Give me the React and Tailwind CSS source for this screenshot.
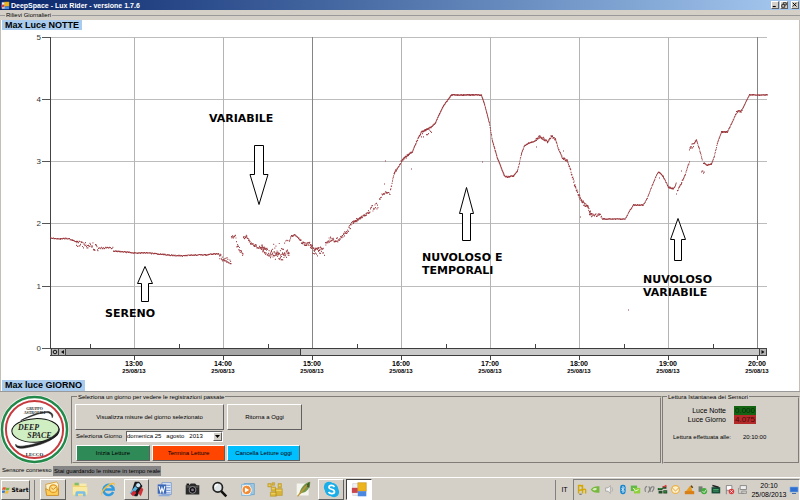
import { clsx } from 'clsx'

const hours = [
  { x: 134, label: '13:00' },
  { x: 223, label: '14:00' },
  { x: 312, label: '15:00' },
  { x: 401, label: '16:00' },
  { x: 490, label: '17:00' },
  { x: 579, label: '18:00' },
  { x: 668, label: '19:00' },
  { x: 757, label: '20:00' },
]

const levels = [
  { y: 37, label: '5' },
  { y: 99, label: '4' },
  { y: 161, label: '3' },
  { y: 223, label: '2' },
  { y: 286, label: '1' },
  { y: 348, label: '0' },
]

// spread = vertical noise, step = distance between two readings
const series = [
  { spread: 0.5, step: 0.7, pts: [[50, 238], [60, 239], [67, 238.5], [72, 240], [77, 242]] },
  { spread: 3.5, step: 0.5, pts: [[76, 244], [85, 246], [92, 246], [98, 249]] },
  { spread: 0.7, step: 0.8, pts: [[98, 248], [113, 248]] },
  { spread: 0.5, step: 0.6, pts: [[113, 251], [134, 253], [148, 253], [168, 255], [182, 256], [190, 255], [205, 255], [212, 254], [219, 254]] },
  { spread: 3, step: 0.4, pts: [[219, 257], [225, 259], [231, 261]] },
  { spread: 2, step: 0.5, pts: [[231, 237], [236, 236]] },
  { spread: 3, step: 0.4, pts: [[236, 243], [239, 250], [243, 255]] },
  { spread: 1.4, step: 0.4, pts: [[243, 238], [246, 236], [250, 243], [257, 247], [265, 249]] },
  { spread: 4, step: 0.3, pts: [[261, 248], [268, 253], [276, 256], [284, 256], [289, 252]] },
  { spread: 5, step: 1.1, pts: [[270, 249], [282, 247], [288, 243]] },
  { spread: 0.8, step: 0.5, pts: [[289, 241], [291, 236], [295, 235], [300, 240]] },
  { spread: 1.8, step: 0.35, pts: [[300, 241], [304, 244], [310, 244], [314, 250], [323, 248]] },
  { spread: 2.5, step: 1, pts: [[310, 250], [316, 254], [325, 253]] },
  { spread: 2.4, step: 0.4, pts: [[325, 243], [330, 239], [337, 240], [344, 234], [350, 227]] },
  { spread: 2, step: 0.5, pts: [[350, 225], [354, 221], [360, 219]] },
  { spread: 0.9, step: 0.4, pts: [[353, 222], [360, 218], [368, 213]] },
  { spread: 3.4, step: 0.5, pts: [[368, 210], [373, 208], [378, 205]] },
  { spread: 1.3, step: 0.6, pts: [[379, 200], [382, 194], [386, 192], [390, 194]] },
  { spread: 1.3, step: 0.4, pts: [[390, 189], [392, 182], [394, 173], [397, 168], [401, 161]] },
  { spread: 0.8, step: 0.3, pts: [[401, 161], [406, 156], [412, 152], [416, 142], [421, 132], [425, 130], [431, 127]] },
  { spread: 4, step: 1, pts: [[421, 134], [427, 132], [432, 129]] },
  { spread: 0.4, step: 0.3, pts: [[431, 127], [435, 123], [439, 114], [443, 106], [451, 95], [481, 95]] },
  { spread: 0.6, step: 0.22, pts: [[481, 95], [484, 104], [489, 123], [492, 141], [497, 158], [504, 176]] },
  { spread: 0.5, step: 0.4, pts: [[504, 176], [507, 177], [513, 176], [517, 171], [519, 163], [521, 154], [524, 146], [528, 143], [535, 141]] },
  { spread: 1.3, step: 0.35, pts: [[535, 140], [539, 137], [544, 139], [547, 142], [551, 136], [555, 139]] },
  { spread: 1, step: 0.35, pts: [[555, 139], [558, 149], [562, 158], [567, 161], [570, 170]] },
  { spread: 2, step: 0.3, pts: [[570, 170], [574, 184], [579, 197], [583, 203], [588, 208], [591, 215]] },
  { spread: 1.6, step: 0.5, pts: [[589, 214], [594, 216], [598, 214], [602, 217]] },
  { spread: 0.4, step: 0.5, pts: [[602, 219], [625, 219], [629, 211], [633, 205], [643, 205], [647, 198], [652, 185], [657, 173], [659, 172]] },
  { spread: 0.7, step: 0.4, pts: [[659, 172], [663, 177], [668, 187], [673, 189], [676, 183]] },
  { spread: 0.8, step: 0.4, pts: [[677, 191], [681, 183], [685, 174], [689, 162]] },
  { spread: 2.4, step: 0.5, pts: [[689, 149], [692, 146], [694, 143]] },
  { spread: 0.8, step: 0.4, pts: [[694, 143], [696, 140], [699, 149], [702, 161]] },
  { spread: 1.5, step: 0.7, pts: [[701, 171], [704, 173]] },
  { spread: 0.5, step: 0.4, pts: [[703, 163], [707, 165], [711, 164], [714, 156], [717, 143], [721, 132], [727, 132], [731, 124], [736, 113]] },
  { spread: 1.2, step: 0.4, pts: [[736, 112], [741, 111], [743, 108]] },
  { spread: 0.3, step: 0.4, pts: [[743, 107], [749, 95], [767, 95]] },
]

const strays = [[385, 161], [384, 184], [406, 158], [411, 169], [482, 162], [563, 151], [580, 217], [536, 147], [628, 310], [681, 171], [659, 178], [676, 194]]

function buildReadings() {
  let seed = 17
  const rand = () => {
    seed = (seed * 16807) % 2147483647
    return seed / 2147483647
  }
  let d = ''
  series.forEach(({ spread, step, pts }) => {
    for (let i = 0; i < pts.length - 1; i++) {
      const [x1, y1] = pts[i]
      const [x2, y2] = pts[i + 1]
      for (let x = x1; x < x2; x += step) {
        const y = y1 + ((y2 - y1) * (x - x1)) / (x2 - x1) + (rand() - 0.5) * 2 * spread
        d += `M${x.toFixed(1)} ${y.toFixed(1)}h.9`
      }
    }
  })
  strays.forEach(([x, y]) => { d += `M${x} ${y}h1` })
  return d
}

const readings = buildReadings()

const notes = [
  { x: 209, y: 122, lines: ['VARIABILE'], arrow: 'M254.5 145.5h9v29h4.500l-9 30-9-30h4.500z' },
  { x: 105, y: 317, lines: ['SERENO'], arrow: 'M141.500 301.500v-18h-4l7.500-17 7.500 17h-4v18z' },
  { x: 422, y: 261, lines: ['NUVOLOSO E', 'TEMPORALI'], arrow: 'M462.500 240.500v-27h-3l7-26 7 26h-3v27z' },
  { x: 643, y: 283, lines: ['NUVOLOSO', 'VARIABILE'], arrow: 'M674.500 260.500v-21h-4l7.500-21 7.500 21h-4v21z' },
]

function Chart() {
  return (
    <svg viewBox="1 30 798 350" className="block w-full h-auto" role="img" aria-label="Max Luce">
      {/* Grid */}
      {levels.map(l => (
        <g key={l.label}>
          <path d={`M50 ${l.y + 0.5}H767`} stroke="#bdbdbd" />
          <path d={`M42 ${l.y + 0.5}H50`} stroke="#555" />
          <text x="41" y={l.y + 3} textAnchor="end" className="font-['Liberation_Sans'] text-[8px]" fill="#333">{l.label}</text>
        </g>
      ))}
      {hours.map(h => (
        <g key={h.label}>
          <path d={`M${h.x + 0.5} 37V348`} stroke={h.x === 312 || h.x === 757 ? '#858585' : '#b4b4b4'} />
          <path d={`M${h.x - 43.5} 344v4`} stroke="#444" />
          <path d={`M${h.x + 0.5} 356v4`} stroke="#444" />
          <text x={h.x} y="366" textAnchor="middle" className="font-['Liberation_Sans'] text-[7px] font-bold">{h.label}</text>
          <text x={h.x} y="373" textAnchor="middle" className="font-['Liberation_Sans'] text-[6px] font-bold">25/08/13</text>
        </g>
      ))}
      <path d="M50.500 37V356" stroke="#444" />

      {/* Scroll bar */}
      <rect x="50" y="348" width="717" height="8" fill="#c9c9c9" />
      <rect x="66" y="349" width="234" height="7" fill="#a6a6a6" />
      <path d="M50 348.500H767M50 355.500H767M300.500 348v8" stroke="#3c3c3c" fill="none" />
      {[51, 58, 759].map(x => (
        <rect key={x} x={x + 0.5} y="348.500" width="7" height="7" fill="#b5b5b5" stroke="#444" />
      ))}
      <circle cx="55" cy="352" r="1.800" fill="none" stroke="#111" />
      <path d="M64 350v4l-3-2zM761.500 350v4l3-2z" fill="#111" />

      <path d={readings} stroke="#9c3a3f" strokeWidth="1.200" fill="none" />

      {notes.map(n => (
        <g key={n.arrow}>
          <path d={n.arrow} fill="#fff" stroke="#000" />
          {n.lines.map((line, i) => (
            <text key={line} x={n.x} y={n.y + i * 13} className="font-['DejaVu_Sans'] text-[11px] font-bold">{line}</text>
          ))}
        </g>
      ))}
    </svg>
  )
}

function Logo() {
  return (
    <svg viewBox="0 0 72 72" className="w-[71px] shrink-0" role="img" aria-label="Gruppo Astrofili Deep Space Lecco">
      <circle cx="35" cy="37" r="35" fill="#f4f6f0" />
      <circle cx="35" cy="37" r="33" fill="#fff" stroke="#23894b" strokeWidth="2.500" />
      <circle cx="35" cy="37" r="29" fill="#fff" stroke="#c73a3e" strokeWidth="2" />
      <ellipse cx="36" cy="38" rx="24" ry="12" fill="#cfeec2" stroke="#111" strokeWidth="1" transform="rotate(-2 36 38)" />
      <path d="M21 28C29 23 44 18 50 19q5 2 3 6 0-4-4-5C42 19 31 24 21 28z" fill="#222" stroke="#222" strokeWidth=".6" />
      <path d="M60 36c0 10-15 16-31 19-8 2-14 1-13-3 1 3 7 2 13 1 15-3 29-9 31-17z" fill="#222" stroke="#222" strokeWidth=".6" />
      <g className="font-['Liberation_Serif'] font-bold" textAnchor="middle" fill="#222">
        <text x="35" y="17" className="text-[4px]">GRUPPO</text>
        <text x="35" y="21" className="text-[4px]">ASTROFILI</text>
        <text x="29" y="38" className="text-[8px] italic">DEEP</text>
        <text x="40" y="46" className="text-[8px] italic">SPACE</text>
        <text x="35" y="64" className="text-[5px]">LECCO</text>
      </g>
    </svg>
  )
}

const raised = 'border border-t-white border-l-white border-r-[#606060] border-b-[#606060]'
const group = 'min-w-0 border-2 border-[#d4d0c8] [border-style:groove]'

function ControlPanel() {
  return (
    <fieldset className={clsx(group, 'flex-1 px-0.5 pb-px pt-[3px]')}>
      <legend className="ml-0.5 px-px leading-[8px]">Seleziona un giorno per vedere le registrazioni passate</legend>
      <div className="flex gap-[3px]">
        <button className={clsx(raised, 'h-[26px] w-[149px]')}>Visualizza misure del giorno selezionato</button>
        <button className={clsx(raised, 'h-[26px] w-[75px]')}>Ritorna a Oggi</button>
      </div>
      <div className="mt-px flex items-center">
        <label htmlFor="giorno" className="w-[51px] whitespace-nowrap pl-px">Seleziona Giorno</label>
        <div className="relative h-[11px] w-[97px] border border-t-[#606060] border-l-[#606060] border-r-white border-b-white bg-white">
          <select id="giorno" className="block h-[9px] w-full appearance-none bg-white leading-[9px]">
            <option>domenica 25{'\u00a0\u00a0'} agosto{'\u00a0\u00a0'} 2013</option>
          </select>
          <span className={clsx(raised, 'pointer-events-none absolute right-0 top-0 flex h-[9px] w-[9px] items-center justify-center bg-[#d4d0c8]')}>
            <svg viewBox="0 0 5 3" className="w-[5px]"><path d="M0 0h5L2.500 3z" /></svg>
          </span>
        </div>
      </div>
      <div className="mt-[3px] flex gap-[2px] pl-px">
        <button className={clsx(raised, 'h-4 w-[74px] bg-[#2e8b57]')}>Inizia Letture</button>
        <button className={clsx(raised, 'h-4 w-[73px] bg-[#ff4500]')}>Termina Letture</button>
        <button className={clsx(raised, 'h-4 w-[73px] bg-[#00bfff]')}>Cancella Letture oggi</button>
      </div>
    </fieldset>
  )
}

function SensorPanel() {
  return (
    <fieldset className={clsx(group, 'w-[138px] shrink-0 pt-[5px]')}>
      <legend className="ml-[3px] px-px leading-[8px]">Lettura Istantanea dei Sensori</legend>
      <dl className="grid grid-cols-[62px_22px] gap-x-2 leading-[9px]">
        <dt className="text-right text-[7px]">Luce Notte</dt>
        <dd className="bg-[#146414] pl-px text-[8px] text-[#062f06]">0.000</dd>
        <dt className="text-right text-[7px]">Luce Giorno</dt>
        <dd className="bg-[#b22a2a] pl-px text-[8px] text-[#4a0808]">4.075</dd>
      </dl>
      <p className="mt-2 flex gap-3 pl-[9px] leading-[10px]">
        <span>Lettura effettuata alle:</span>
        <span>20:10:00</span>
      </p>
    </fieldset>
  )
}

const apps = [
  { name: 'Outlook', raised: true, art: <><path d="M2 4l13-3 2 3v12H3z" fill="#fdf3d0" stroke="#d79a2a" /><path d="M2 9l8 4 7-4v8H3z" fill="#ffcd57" stroke="#c88a20" /><circle cx="11" cy="9" r="4.500" fill="#ffe08a" stroke="#e09a20" strokeWidth="1.500" /><path d="M8.500 8l2.500 2 3-3" stroke="#c77b17" fill="none" /></> },
  { name: 'Esplora risorse', art: <><path d="M1 3h6l1 2h9v12H1z" fill="#f0d470" /><path d="M3 2h5v3H3z" fill="#7fbf6a" /><path d="M9 3h8v3H9z" fill="#f7ebb0" /><path d="M1 7h17v9H1z" fill="#fae9a0" /><path d="M4 18v-4q0-2 2-2h8q2 0 2 2v4h-3v-3H7v3z" fill="#79bfe8" /></> },
  { name: 'Internet Explorer', art: <><path d="M15.500 13a6 6 0 1 1 .5-3H5" fill="none" stroke="#2e9be0" strokeWidth="3" /><path d="M2 17C-1 13 8 3 15 2c3 0 3 2 1 5 1-3 0-4-2-3C8 6 2 13 2 17z" fill="#f0bd3c" /></> },
  { name: 'Strumenti', raised: true, art: <><path d="M8 1h5l4 5-6 12H8l-4-5z" fill="#16181c" /><path d="M2 14l9-11 3 2-9 12z" fill="#54b7e6" /><circle cx="12" cy="5" r="3" fill="#c9e8f7" stroke="#111" /><path d="M3 15l4-4 3 3-4 4z" fill="#cf2a35" /><path d="M12 14l4-7 2 3-3 8z" fill="#d23236" /></> },
  { name: 'Word', art: <><path d="M7 2h11v14H7z" fill="#e7effb" stroke="#7393c8" /><path d="M12 5h5M12 8h5M12 11h5M9 14h8" stroke="#527fc4" /><path d="M2 4h10v11H2z" fill="#3d68b8" /><path d="M3.500 6l2 7 1.500-5 1.500 5 2-7" fill="none" stroke="#fff" strokeWidth="1.300" /><path d="M3 17h13" stroke="#8cabdd" strokeWidth="2" /></> },
  { name: 'Fotocamera', art: <><path d="M2 5h4l2-2h5l2 2h3v11H2z" fill="#2b2a2a" /><path d="M3 7h14" stroke="#777" /><circle cx="10" cy="10.500" r="4" fill="#111" stroke="#999" /><circle cx="10" cy="10.500" r="1.700" fill="#83758e" /><path d="M3 4h3" stroke="#111" strokeWidth="2" /></> },
  { name: 'Lente', art: <><circle cx="8" cy="7.500" r="5.500" fill="#dfe5e7" stroke="#222" strokeWidth="2" /><path d="M5 7q0-3 3-3" stroke="#fff" strokeWidth="1.500" fill="none" /><path d="M12 12l6 6" stroke="#111" strokeWidth="3" /></> },
  { name: 'Media Player', art: <><path d="M6 3h12v13H6z" fill="#9fc8e4" stroke="#6ca4cc" /><path d="M3 4h11v13H3z" fill="#d4e8f5" stroke="#80b4d6" /><circle cx="9" cy="10.500" r="5.500" fill="#f18a32" stroke="#fff" /><path d="M7 7.500v6l5-3z" fill="#fff" /></> },
  { name: 'Blocchi', art: <><path d="M1 3h4v4H1zM6 2h3v3H6zM5 7h5v5H5zM10 9h8v8h-8zM4 13h7v5H4zM13 3h4v5h-4z" fill="#d9b43a" stroke="#b39122" strokeWidth=".6" /><path d="M6 9h3M11 11h6M5 15h5M2 5h2M14 5h2" stroke="#f6df71" /></> },
  { name: 'Penna', art: <><path d="M2 3h14v14H2z" fill="#f5f5ef" /><path d="M5 16C6 9 11 2 18 1c0 7-4 13-10 13z" fill="#76964a" /><path d="M12 6l5-5v7z" fill="#3f5f2f" /><path d="M3 18L14 5" stroke="#c79632" strokeWidth="1.500" /></> },
  { name: 'Skype', raised: true, art: <><circle cx="7" cy="7" r="6" fill="#19aee9" /><circle cx="13" cy="13" r="6" fill="#19aee9" /><circle cx="10" cy="10" r="8" fill="#19aee9" /><path d="M13.500 7C12 4.500 7 4.500 7 7.500c0 3 6.500 1.500 6.500 5 0 3-5.500 3-7 .5" fill="none" stroke="#fff" strokeWidth="2" /></> },
  { name: 'Lux Rider', active: true, art: <AppGlyph /> },
]

function AppGlyph() {
  return (
    <>
      <path d="M2 3h7v14H2z" fill="#f0f0f4" stroke="#c3c3cc" strokeWidth=".6" />
      <path d="M1 8h7v6H1z" fill="#c9444c" />
      <path d="M8 2h10v10H8z" fill="#eeb41e" stroke="#b98a14" strokeWidth=".6" />
      <path d="M8 12h10v6H8z" fill="#4b88e0" />
    </>
  )
}

const tray = [
  { name: 'Photo', art: <><path d="M2 12V2h2q3 0 3 3T3 8M7 1v11M7 8q4-3 4 0v4" fill="none" stroke="#d4a800" strokeWidth="1.800" /><path d="M3 13h3" stroke="#444" /></> },
  { name: 'NVIDIA', art: <><path d="M1 7q4-5 11-4v8q-8 1-11-4z" fill="#78b83e" /><path d="M3 7q3-3 6-1-2 4-6 1z" fill="#d7efc0" /></> },
  { name: 'Volume', art: <><path d="M2 5h3l3-3v10L5 9H2z" fill="#f5f5f5" stroke="#888" strokeWidth=".7" /><path d="M10 4q2 3 0 6" stroke="#aaa" fill="none" /></> },
  { name: 'Bluetooth', art: <><rect x="4" y="1" width="7" height="12" rx="3" fill="#1786cf" /><path d="M5.500 5l4 4-2 2V3l2 2-4 4" stroke="#fff" fill="none" strokeWidth=".9" /></> },
  { name: 'Sync', art: <><path d="M1 2h8v7H1z" fill="#5eb846" /><path d="M5 5h8v7H5z" fill="#8ed03c" /><path d="M4 5l3 4 4-2" stroke="#fff" fill="none" /></> },
  { name: 'Rete', art: <><path d="M2 10q-2-6 2-7M5 11q4-4 1-8M8 10q-1-5 3-7M10 10q4-4 2-7" stroke="#858585" fill="none" strokeWidth="1.500" /></> },
  { name: 'Monitor', art: <><path d="M1 5h6v3H1zM7 3h5v3H7zM2 9h5v3H2zM8 8h5v4H8z" fill="#234e29" /><path d="M8 4l4-2" stroke="#e03434" strokeWidth="2" /><path d="M2 6h4M9 10h3" stroke="#3bb549" /></> },
  { name: 'Posta', art: <><circle cx="7" cy="7" r="5" fill="#fff1c8" stroke="#e9b04c" strokeWidth="1.500" /><path d="M3 5l4 4 4-4" stroke="#d28b2d" fill="none" /></> },
  { name: 'Avviso', art: <><path d="M2 10l6-8 3 8z" fill="#e89b1d" /><path d="M1 9h12v4H1z" fill="#d97f18" /><path d="M9 2l2 3" stroke="#593e17" strokeWidth="2" /></> },
  { name: 'USB', art: <><path d="M2 3h5v7H2z" fill="#747d74" /><circle cx="9" cy="9" r="4" fill="#45ab3d" /><path d="M7 9l2 2 3-4" stroke="#fff" fill="none" /></> },
  { name: 'Video', art: <><path d="M2 4h11v8H2z" fill="#174c38" /><path d="M3 2l8 2" stroke="#222" strokeWidth="2" /><path d="M4 7h7M4 9h7" stroke="#54bd76" /></> },
  { name: 'Centro operativo', art: <><path d="M3 13V2h7v6H3" fill="#fff" stroke="#777" /><circle cx="9.500" cy="9.500" r="3.500" fill="#d83b3f" /><path d="M8 8l3 3m0-3l-3 3" stroke="#fff" /></> },
  { name: 'Connessione', art: <><path d="M4 2h8v5H4z" fill="#eee" stroke="#777" /><path d="M2 5v7h7M6 9h6v3H6z" fill="none" stroke="#888" /></> },
]

function Taskbar() {
  return (
    <footer className="flex h-6 items-center border-t border-white bg-[#d4d0c8] pl-px">
      <button className={clsx(raised, "flex h-5 w-[29px] items-center justify-center gap-px font-['DejaVu_Sans'] font-bold")}>
        <svg viewBox="0 0 10 10" className="w-[8px]">
          <path d="M1 2q2-1 4 0L4 5Q2 4 0 5z" fill="#e5532c" /><path d="M5.500 2q2 1 4 0l-1 3q-2 1-4 0z" fill="#6db33b" />
          <path d="M0 6q2-1 4 0L3 9Q1 8-1 9z" fill="#3a7bd5" /><path d="M4.500 6q2 1 4 0l-1 3q-2 1-4 0z" fill="#f5bd22" />
        </svg>
        Start
      </button>
      <span className="ml-1 h-5 w-px bg-[#808080]" />
      <nav className="ml-1 grid w-[334px] grid-cols-12">
        {apps.map(app => (
          <button
            key={app.name}
            aria-label={app.name}
            className={clsx(
              'mx-px flex h-[21px] items-center justify-center',
              app.raised && raised,
              app.active && 'border border-t-[#404040] border-l-[#404040] border-r-white border-b-white bg-white'
            )}
          >
            <svg viewBox="0 0 20 20" className="w-[17px]">{app.art}</svg>
          </button>
        ))}
      </nav>
      <div className="ml-auto flex h-full items-center">
        <span className="h-5 w-px bg-[#808080]" />
        <span className="w-[17px] text-center text-[7px]">IT</span>
        <div className="flex h-[22px] items-center border border-t-[#808080] border-l-[#808080] border-r-white border-b-white pl-[2px]">
          <div className="grid w-[173px] grid-cols-13">
            {tray.map(t => (
              <svg key={t.name} viewBox="0 0 14 14" className="mx-auto w-[11px]" role="img" aria-label={t.name}>{t.art}</svg>
            ))}
          </div>
          <time className="w-[40px] text-center text-[7px] leading-[9px]">20:10<br />25/08/2013</time>
          <svg viewBox="0 0 10 10" className="w-[10px]" aria-hidden="true">
            <path d="M1 2h8v5H1z" fill="#2f6fd0" stroke="#7ba7e6" strokeWidth=".6" /><path d="M3 8.500h4" stroke="#4a6fa8" />
          </svg>
        </div>
      </div>
    </footer>
  )
}

const winButtons = [
  { label: 'Riduci', art: <path d="M1 6h4" strokeWidth="1.500" /> },
  { label: 'Ripristina', art: <path d="M3 3V1h4v3H5M1 3.500h4V7H1z" /> },
  { label: 'Chiudi', art: <path d="M1 1l5 5m0-5L1 6" strokeWidth="1.300" /> },
]

export default function App() {
  return (
    <div className="bg-[#d4d0c8] font-['Liberation_Sans',sans-serif] text-[6px] leading-[9px] text-black">
      <header className="flex h-[10px] items-center bg-linear-to-r from-[#0a246a] to-[#a6caf0] px-px text-white">
        <svg viewBox="0 0 20 20" className="w-[9px]" aria-hidden="true"><AppGlyph /></svg>
        <h1 className="ml-px text-[7px] font-bold">DeepSpace - Lux Rider - versione 1.7.6</h1>
        <div className="ml-auto flex gap-px">
          {winButtons.map(b => (
            <button key={b.label} aria-label={b.label} className={clsx(raised, 'flex h-2 w-[8px] items-center justify-center bg-[#d4d0c8] last:ml-0.5')}>
              <svg viewBox="0 0 8 8" className="w-[6px]" fill="none" stroke="#000">{b.art}</svg>
            </button>
          ))}
        </div>
      </header>

      <main>
        <section>
          <div className="flex h-[10px] items-center">
            <span className="w-[5px] border-t border-[#999]" />
            <h2 className="px-px">Rilievi Giornalieri</h2>
            <span className="flex-1 border-t border-[#999]" />
          </div>
          <div className="border-x border-[#c4c0b8] bg-white">
            <div className="ml-px h-[10px] w-fit bg-[#a9cbee] px-[3px] text-[9px] font-bold leading-[10px]">Max Luce NOTTE</div>
            <Chart />
            <div className="ml-px h-[11px] w-fit bg-[#a9cbee] px-[3px] text-[9px] font-bold leading-[11px]">Max luce GIORNO</div>
          </div>
        </section>

        <section className="flex border-t border-[#999] pt-px">
          <Logo />
          <ControlPanel />
          <SensorPanel />
        </section>

        <div className="flex h-[13px] items-center gap-[3px] pl-0.5">
          <span className="w-[48px] whitespace-nowrap">Sensore connesso</span>
          <span className="bg-[#858585] px-px leading-[10px]">Stai guardando le misure in tempo reale</span>
        </div>
      </main>

      <Taskbar />
    </div>
  )
}
